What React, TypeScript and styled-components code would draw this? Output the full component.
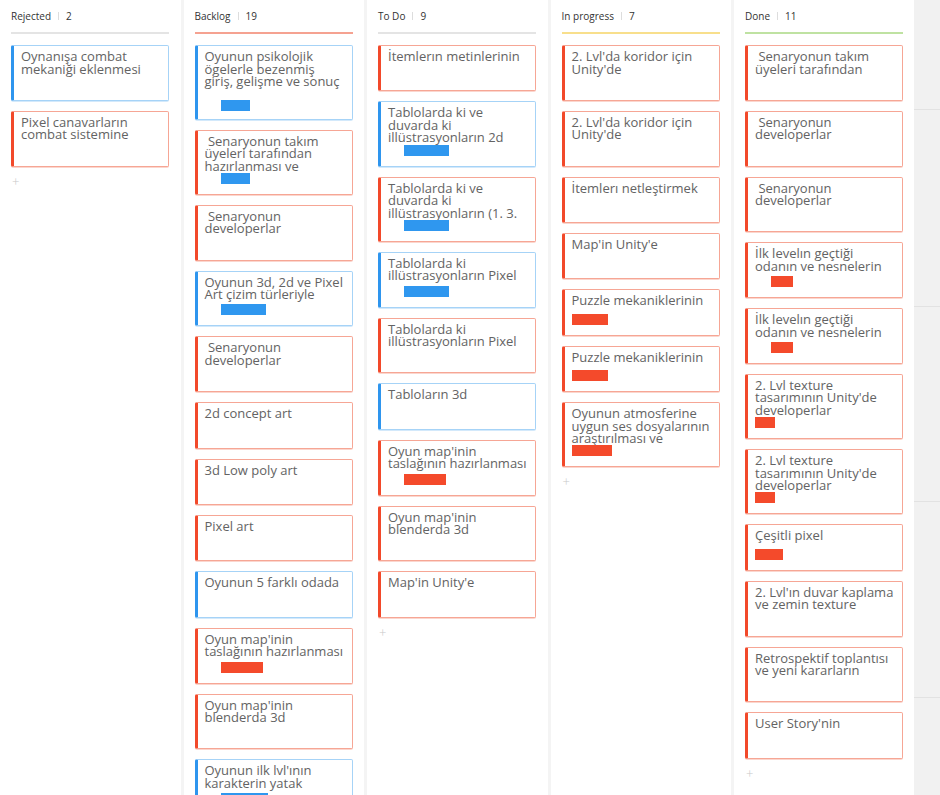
import styled, { createGlobalStyle } from 'styled-components';

const GlobalStyle = createGlobalStyle`
  html, body {
    margin: 0;
    padding: 0;
    background: #ffffff;
  }
  body {
    font-family: 'Open Sans', 'Liberation Sans', sans-serif;
  }
`;

type Kind = 'blue' | 'red';

type Tag = {
  width: number
  kind: Kind
  indent?: boolean
};

type CardData = {
  text: string
  kind: Kind
  tag?: Tag
};

type ColumnData = {
  title: string
  count: number
  accent: string
  cards: CardData[]
};

const strong: Record<Kind, string> = {
  blue: '#2e95ee',
  red: '#f2492a',
};

const soft: Record<Kind, string> = {
  blue: '#a6d3f7',
  red: '#f6a695',
};

const columns: ColumnData[] = [
  {
    title: 'Rejected',
    count: 2,
    accent: '#e4e4e4',
    cards: [
      { text: 'Oynanışa combat\nmekaniği eklenmesi', kind: 'blue' },
      { text: 'Pixel canavarların\ncombat sistemine', kind: 'red' },
    ],
  },
  {
    title: 'Backlog',
    count: 19,
    accent: '#f5a291',
    cards: [
      { text: 'Oyunun psikolojik\nögelerle bezenmiş\ngiriş, gelişme ve sonuç\n ', kind: 'blue', tag: { width: 29, kind: 'blue', indent: true } },
      { text: ' Senaryonun takım\nüyeleri tarafından\nhazırlanması ve', kind: 'red', tag: { width: 29, kind: 'blue', indent: true } },
      { text: ' Senaryonun\ndeveloperlar', kind: 'red' },
      { text: 'Oyunun 3d, 2d ve Pixel\nArt çizim türleriyle', kind: 'blue', tag: { width: 45, kind: 'blue', indent: true } },
      { text: ' Senaryonun\ndeveloperlar', kind: 'red' },
      { text: '2d concept art', kind: 'red' },
      { text: '3d Low poly art', kind: 'red' },
      { text: 'Pixel art', kind: 'red' },
      { text: 'Oyunun 5 farklı odada', kind: 'blue' },
      { text: "Oyun map'inin\ntaslağının hazırlanması", kind: 'red', tag: { width: 42, kind: 'red', indent: true } },
      { text: "Oyun map'inin\nblenderda 3d", kind: 'red' },
      { text: "Oyunun ilk lvl'ının\nkarakterin yatak", kind: 'blue', tag: { width: 47, kind: 'blue', indent: true } },
    ],
  },
  {
    title: 'To Do',
    count: 9,
    accent: '#e4e4e4',
    cards: [
      { text: 'İtemlerın metinlerinin', kind: 'red' },
      { text: 'Tablolarda ki ve\nduvarda ki\nillüstrasyonların 2d', kind: 'blue', tag: { width: 45, kind: 'blue', indent: true } },
      { text: 'Tablolarda ki ve\nduvarda ki\nillüstrasyonların (1. 3.', kind: 'red', tag: { width: 45, kind: 'blue', indent: true } },
      { text: 'Tablolarda ki\nillüstrasyonların Pixel', kind: 'blue', tag: { width: 45, kind: 'blue', indent: true } },
      { text: 'Tablolarda ki\nillüstrasyonların Pixel', kind: 'red' },
      { text: 'Tabloların 3d', kind: 'blue' },
      { text: "Oyun map'inin\ntaslağının hazırlanması", kind: 'red', tag: { width: 42, kind: 'red', indent: true } },
      { text: "Oyun map'inin\nblenderda 3d", kind: 'red' },
      { text: "Map'in Unity'e", kind: 'red' },
    ],
  },
  {
    title: 'In progress',
    count: 7,
    accent: '#f8df8c',
    cards: [
      { text: "2. Lvl'da koridor için\nUnity'de", kind: 'red' },
      { text: "2. Lvl'da koridor için\nUnity'de", kind: 'red' },
      { text: 'İtemlerı netleştirmek', kind: 'red' },
      { text: "Map'in Unity'e", kind: 'red' },
      { text: 'Puzzle mekaniklerinin', kind: 'red', tag: { width: 36, kind: 'red' } },
      { text: 'Puzzle mekaniklerinin', kind: 'red', tag: { width: 36, kind: 'red' } },
      { text: 'Oyunun atmosferine\nuygun ses dosyalarının\naraştırılması ve', kind: 'red', tag: { width: 40, kind: 'red' } },
    ],
  },
  {
    title: 'Done',
    count: 11,
    accent: '#bfe2a2',
    cards: [
      { text: ' Senaryonun takım\nüyeleri tarafından', kind: 'red' },
      { text: ' Senaryonun\ndeveloperlar', kind: 'red' },
      { text: ' Senaryonun\ndeveloperlar', kind: 'red' },
      { text: 'İlk levelın geçtiği\nodanın ve nesnelerin', kind: 'red', tag: { width: 22, kind: 'red', indent: true } },
      { text: 'İlk levelın geçtiği\nodanın ve nesnelerin', kind: 'red', tag: { width: 22, kind: 'red', indent: true } },
      { text: "2. Lvl texture\ntasarımının Unity'de\ndeveloperlar", kind: 'red', tag: { width: 20, kind: 'red' } },
      { text: "2. Lvl texture\ntasarımının Unity'de\ndeveloperlar", kind: 'red', tag: { width: 20, kind: 'red' } },
      { text: 'Çeşitli pixel', kind: 'red', tag: { width: 28, kind: 'red' } },
      { text: "2. Lvl'ın duvar kaplama\nve zemin texture", kind: 'red' },
      { text: 'Retrospektif toplantısı\nve yeni kararların', kind: 'red' },
      { text: "User Story'nin", kind: 'red' },
    ],
  },
];

const Board = styled.div`
  display: flex;
  height: 100vh;
  overflow: hidden;
  background: #f1f1f1;
`;

const Column = styled.section<{ $last?: boolean }>`
  flex: none;
  box-sizing: border-box;
  width: ${({ $last }) => ($last ? '180px' : '183.5px')};
  padding-left: 11px;
  background: #ffffff;
  border-right: ${({ $last }) => ($last ? 'none' : '3px solid #f4f4f4')};
`;

const Header = styled.header<{ $accent: string }>`
  display: flex;
  align-items: center;
  width: 158px;
  height: 32px;
  border-bottom: 2px solid ${({ $accent }) => $accent};
  font-size: 10px;
  color: #333333;
`;

const Divider = styled.span`
  width: 1px;
  height: 8px;
  margin: 0 7px 0 7px;
  background: #dddddd;
`;

const CardList = styled.div`
  display: flex;
  flex-direction: column;
  gap: 10px;
  padding-top: 11px;
`;

// the board grows a card a little under 10px for every text line
const Card = styled.div<{ $kind: Kind; $lines: number }>`
  display: flex;
  flex-direction: column;
  flex: none;
  box-sizing: border-box;
  width: 158px;
  height: ${({ $lines }) => 37 + $lines * 9.4}px;
  padding: 4px 4px 10px 7px;
  background: #ffffff;
  border: 1px solid ${({ $kind }) => soft[$kind]};
  border-left: 3px solid ${({ $kind }) => strong[$kind]};
  border-radius: 2px;
  box-shadow: 0 1px 0 ${({ $kind }) => ($kind === 'blue' ? '#d3e9fb' : '#fbd6ce')};
`;

const Title = styled.div`
  font-size: 13px;
  line-height: 12.5px;
  color: #636363;
  white-space: pre;
`;

const Footer = styled.div`
  display: flex;
  height: 11px;
  margin-top: auto;
`;

const Label = styled.span<{ $kind: Kind; $width: number; $indent?: boolean }>`
  display: block;
  width: ${({ $width }) => $width}px;
  height: 11px;
  margin-left: ${({ $indent }) => ($indent ? '16px' : '0')};
  background: ${({ $kind }) => ($kind === 'blue' ? '#2f97ef' : '#f44a2b')};
`;

const AddButton = styled.div`
  margin: 8px 0 0 1px;
  font-size: 13px;
  font-weight: 300;
  line-height: 13px;
  color: #c9c9c9;
`;

const Rail = styled.aside`
  flex: 1;
  display: flex;
  flex-direction: column;
  background: #f1f1f1;
`;

const RailRow = styled.div<{ $height: number }>`
  flex: none;
  height: ${({ $height }) => $height}px;
  border-bottom: 1px solid #e2e2e2;
`;

const renderCards = (cards: CardData[]) =>
  cards.map(({ text, kind, tag }, index) => (
    <Card $kind={kind} $lines={text.split('\n').length} key={index.toString()}>
      <Title>{text}</Title>
      <Footer>
        {tag && <Label $kind={tag.kind} $width={tag.width} $indent={tag.indent} />}
      </Footer>
    </Card>
  ));

const App = () => (
  <>
    <GlobalStyle />
    <Board>
      {columns.map(({ title, count, accent, cards }, index) => (
        <Column key={title} $last={index === columns.length - 1}>
          <Header $accent={accent}>
            {title}
            <Divider />
            {count}
          </Header>
          <CardList>
            {renderCards(cards)}
          </CardList>
          {title !== 'Backlog' && <AddButton>+</AddButton>}
        </Column>
      ))}
      <Rail>
        <RailRow $height={109} />
        <RailRow $height={196} />
        <RailRow $height={194} />
        <RailRow $height={195} />
      </Rail>
    </Board>
  </>
);

export default App;
